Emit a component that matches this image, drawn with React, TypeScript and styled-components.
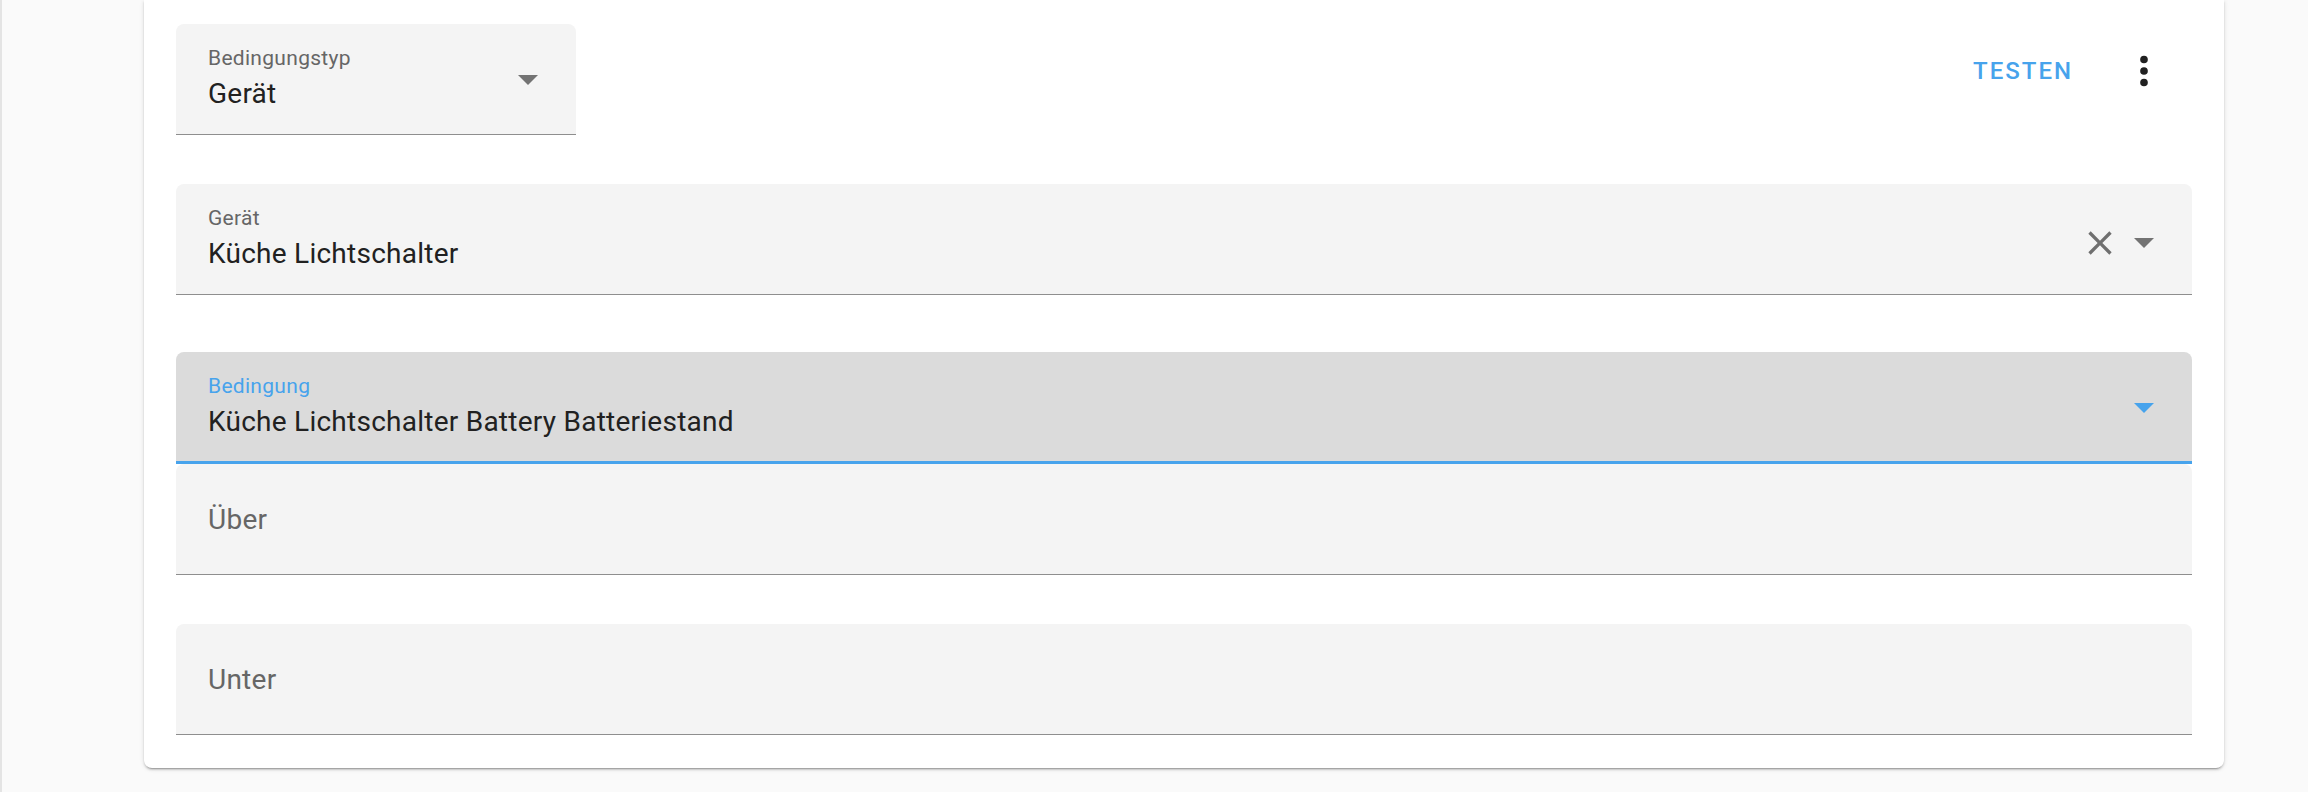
import React from "react";
import styled, { createGlobalStyle } from "styled-components";

const BLUE = "#47a3ec";

const GlobalStyle = createGlobalStyle`
  html, body {
    margin: 0;
    padding: 0;
    background: #fafafa;
    font-family: Roboto, "Noto Sans", "Liberation Sans", sans-serif;
  }
  * { box-sizing: border-box; }
`;

const Page = styled.div`
  min-height: 792px;
  background: #fafafa;
  border-left: 2px solid #e4e4e4;
  padding: 0 84px 24px 142px;
`;

const Card = styled.div`
  background: #ffffff;
  border-radius: 0 0 8px 8px;
  box-shadow: 0 2px 2px 0 rgba(0, 0, 0, 0.14), 0 1px 5px 0 rgba(0, 0, 0, 0.12),
    0 3px 1px -2px rgba(0, 0, 0, 0.2);
  padding: 24px 32px 33px 32px;
  display: flex;
  flex-direction: column;
`;

const Header = styled.div`
  display: flex;
  align-items: flex-start;
  justify-content: space-between;
`;

const Actions = styled.div`
  display: flex;
  align-items: center;
  margin-top: 23px;
  padding-right: 25px;
`;

const TextButton = styled.button`
  border: none;
  background: transparent;
  height: 48px;
  padding: 0;
  margin-right: 48px;
  font-family: Roboto, "Noto Sans", sans-serif;
  font-weight: 500;
  font-size: 24px;
  letter-spacing: 2px;
  text-transform: uppercase;
  color: ${BLUE};
  cursor: pointer;
`;

const IconButton = styled.button`
  border: none;
  background: transparent;
  padding: 0;
  width: 46px;
  height: 46px;
  display: flex;
  align-items: center;
  justify-content: center;
  color: #212121;
  cursor: pointer;
`;

const Field = styled.div<{ $focused?: boolean; $width?: number; $gap?: number }>`
  display: flex;
  flex-direction: column;
  width: ${(p) => (p.$width ? `${p.$width}px` : "100%")};
  height: ${(p) => (p.$focused ? 112 : 111)}px;
  margin-top: ${(p) => p.$gap ?? 0}px;
  background: ${(p) => (p.$focused ? "#dbdbdb" : "#f4f4f4")};
  border-radius: 8px 8px 0 0;
  border-bottom: ${(p) => (p.$focused ? `3px solid ${BLUE}` : "1px solid #8e8e8e")};
`;

const FieldBody = styled.div`
  flex: 1;
  display: flex;
  align-items: center;
  padding: 0 38px 0 32px;
`;

const FieldText = styled.div<{ $placeholderOnly?: boolean }>`
  flex: 1;
  align-self: stretch;
  padding-top: ${(p) => (p.$placeholderOnly ? 40 : 24)}px;
  min-width: 0;
`;

const Label = styled.div<{ $focused?: boolean }>`
  font-size: 21px;
  line-height: 21px;
  letter-spacing: 0.3px;
  color: ${(p) => (p.$focused ? BLUE : "#666666")};
  white-space: nowrap;
`;

const Value = styled.div`
  margin-top: 9px;
  font-size: 28px;
  line-height: 32px;
  letter-spacing: 0.25px;
  color: #212121;
  white-space: nowrap;
`;

const Placeholder = styled.div`
  font-size: 28px;
  line-height: 32px;
  letter-spacing: 0.25px;
  color: #666666;
`;

const Trailing = styled.div<{ $offset?: number }>`
  display: flex;
  align-items: center;
  gap: 14px;
  padding-top: ${(p) => p.$offset ?? 2}px;
`;

const ArrowIcon = ({ color }: { color: string }) => (
  <svg width="20" height="10" viewBox="0 0 20 10">
    <polygon points="0,0 20,0 10,10" fill={color} />
  </svg>
);

const CloseIcon = () => (
  <svg width="40" height="40" viewBox="0 0 24 24">
    <path
      fill="#6f6f6f"
      d="M19,6.41L17.59,5L12,10.59L6.41,5L5,6.41L10.59,12L5,17.59L6.41,19L12,13.41L17.59,19L19,17.59L13.41,12L19,6.41Z"
    />
  </svg>
);

const DotsIcon = () => (
  <svg width="46" height="46" viewBox="0 0 24 24">
    <path
      fill="#212121"
      d="M12,16A2,2 0 0,1 14,18A2,2 0 0,1 12,20A2,2 0 0,1 10,18A2,2 0 0,1 12,16M12,10A2,2 0 0,1 14,12A2,2 0 0,1 12,14A2,2 0 0,1 10,12A2,2 0 0,1 12,10M12,4A2,2 0 0,1 14,6A2,2 0 0,1 12,8A2,2 0 0,1 10,6A2,2 0 0,1 12,4Z"
    />
  </svg>
);

export default function App() {
  return (
    <>
      <GlobalStyle />
      <Page>
        <Card>
          <Header>
            <Field $width={400}>
              <FieldBody>
                <FieldText>
                  <Label>Bedingungstyp</Label>
                  <Value>Gerät</Value>
                </FieldText>
                <Trailing>
                  <ArrowIcon color="#737373" />
                </Trailing>
              </FieldBody>
            </Field>
            <Actions>
              <TextButton>Testen</TextButton>
              <IconButton aria-label="Menü">
                <DotsIcon />
              </IconButton>
            </Actions>
          </Header>

          <Field $gap={49}>
            <FieldBody>
              <FieldText>
                <Label>Gerät</Label>
                <Value>Küche Lichtschalter</Value>
              </FieldText>
              <Trailing $offset={7}>
                <CloseIcon />
                <ArrowIcon color="#737373" />
              </Trailing>
            </FieldBody>
          </Field>

          <Field $gap={57} $focused>
            <FieldBody>
              <FieldText>
                <Label $focused>Bedingung</Label>
                <Value>Küche Lichtschalter Battery Batteriestand</Value>
              </FieldText>
              <Trailing>
                <ArrowIcon color={BLUE} />
              </Trailing>
            </FieldBody>
          </Field>

          <Field>
            <FieldBody>
              <FieldText $placeholderOnly>
                <Placeholder>Über</Placeholder>
              </FieldText>
            </FieldBody>
          </Field>

          <Field $gap={49}>
            <FieldBody>
              <FieldText $placeholderOnly>
                <Placeholder>Unter</Placeholder>
              </FieldText>
            </FieldBody>
          </Field>
        </Card>
      </Page>
    </>
  );
}
